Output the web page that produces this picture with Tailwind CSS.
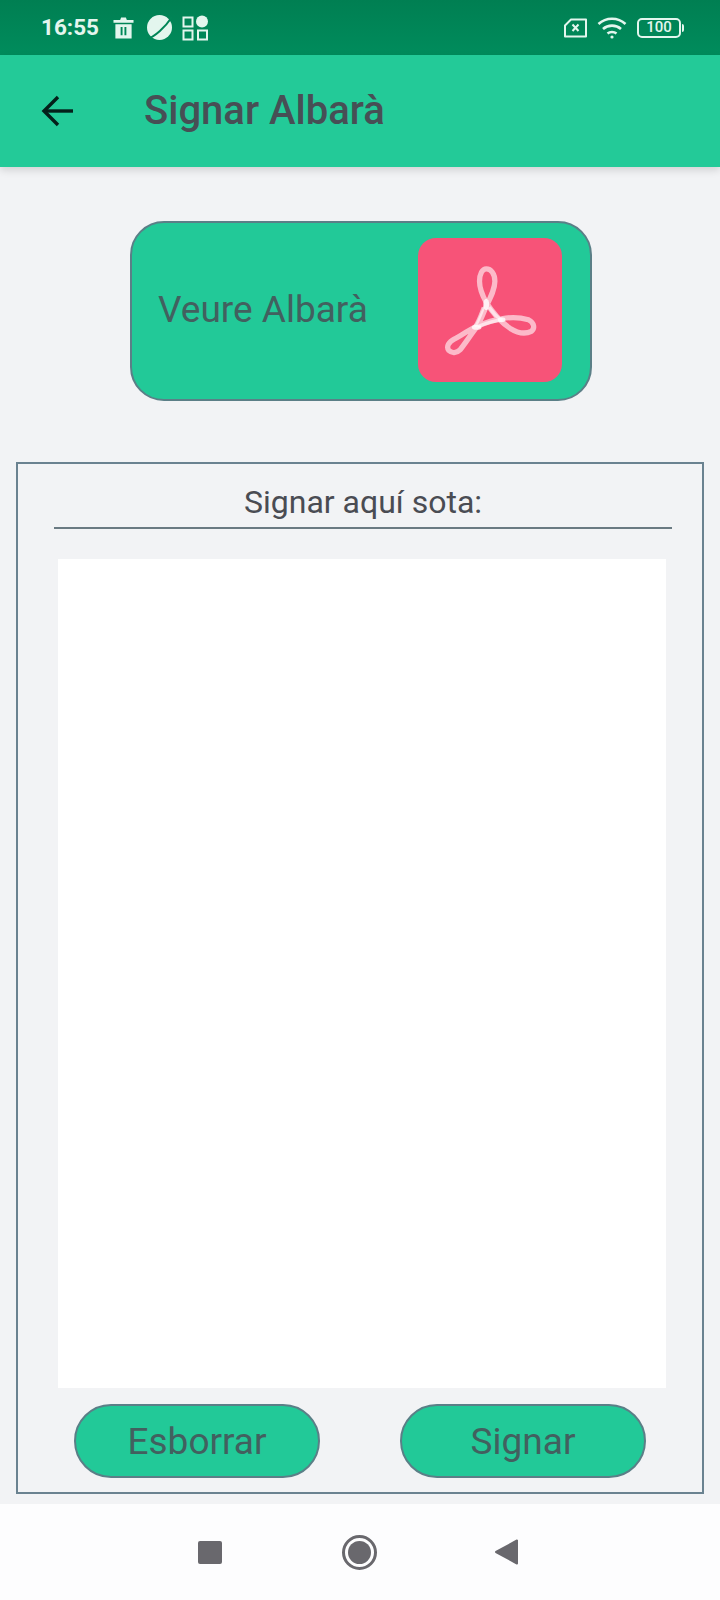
<!DOCTYPE html>
<html lang="ca">
<head>
<meta charset="utf-8">
<title>Signar Albarà</title>
<script src="https://cdn.jsdelivr.net/npm/@tailwindcss/browser@4"></script>
</head>
<body class="m-0 bg-white font-['Roboto',sans-serif]">
<div class="flex h-[1600px] w-[720px] flex-col overflow-hidden bg-[#f2f3f5]">
  <!-- Status bar -->
  <div class="flex h-[55px] items-center justify-between bg-gradient-to-b from-[#007f52] to-[#008c5c] pl-[41px] pr-[36px] text-[#e3f6ee]">
    <div class="flex items-center">
      <span class="text-[22.500px] font-bold leading-none">16:55</span>
      <svg class="ml-[14px]" width="21" height="24" viewBox="0 0 22 24" fill="currentColor"><path d="M0.500 3.500h7l1-2.500h5l1 2.500h7v3h-21z"/><path fill-rule="evenodd" d="M2.500 8h17v15h-17zM8 11v8.500h2v-8.500zM12 11v8.500h2v-8.500z"/></svg>
      <svg class="ml-[12px]" width="27" height="27" viewBox="0 0 27 27"><circle cx="13.500" cy="13.500" r="12.500" fill="currentColor"/><path d="M1 24.500C8 24 20 12 26 3" fill="none" stroke="#008557" stroke-width="2"/></svg>
      <svg class="ml-[9px]" width="27" height="27" viewBox="0 0 27 27" fill="none" stroke="currentColor" stroke-width="2"><rect x="1.500" y="3.500" width="9" height="9"/><rect x="1.500" y="16.500" width="9" height="9"/><rect x="16" y="16.500" width="9" height="9"/><circle cx="20" cy="7.500" r="6" fill="currentColor" stroke="none"/></svg>
    </div>
    <div class="flex items-center">
      <svg width="25" height="20" viewBox="0 0 25 20" fill="none" stroke="currentColor" stroke-width="2"><path d="M8 1.500h15v17h-21v-11z" stroke-linejoin="round"/><path d="M9.500 6.500l6 6.500m0-6.500l-6 6.500" stroke-width="2"/></svg>
      <svg class="ml-[9px]" width="30" height="22" viewBox="0 0 30 22" fill="none" stroke="currentColor" stroke-width="2.600"><path d="M1.500 7C9 0 21 0 28.500 7"/><path d="M6 12C11 7.500 19 7.500 24 12"/><path d="M10.500 16.500C13 14.500 17 14.500 19.500 16.500"/><circle cx="15" cy="20" r="1.600" fill="currentColor" stroke="none"/></svg>
      <div class="ml-[10px] flex items-center">
        <div class="flex h-[20px] w-[44px] items-center justify-center rounded-[5px] border-2 border-[#e3f6ee] text-[15px] font-medium leading-none">100</div>
        <div class="ml-[1px] h-[8px] w-[2px] rounded-r bg-[#e3f6ee]"></div>
      </div>
    </div>
  </div>

  <!-- App bar -->
  <header class="relative z-10 flex h-[112px] items-center bg-[#23ca98] pl-[41px] shadow-[0_3px_8px_rgba(0,0,0,0.14)]">
    <svg width="32" height="32" viewBox="0 0 32 32" fill="none" stroke="#04201a" stroke-width="3.400"><path d="M32 16H3"/><path d="M17 2 3 16l14 14"/></svg>
    <h1 class="ml-[71px] text-[40px] font-medium leading-none text-[#474f55]">Signar Albarà</h1>
  </header>

  <!-- Content -->
  <main class="flex flex-1 flex-col pb-[10px] pl-[16px] pr-[16px] pt-[54px]">
    <div class="ml-[114px] flex h-[180px] w-[462px] items-center rounded-[34px] border-2 border-[#5b7f87] bg-[#22c998] pl-[26px] pr-[28px]">
      <span class="mb-[3px] flex-1 text-[37px] leading-none text-[#42605f]">Veure Albarà</span>
      <div class="mb-[2px] h-[144px] w-[144px] rounded-[18px] bg-[#f75378]">
        <svg width="144" height="144" viewBox="0 0 144 144" fill="none" stroke="#fff" stroke-opacity="0.6" stroke-width="5.500"><g transform="translate(2 4) scale(0.96)"><path d="M69 63C64 54 62 47 62 41C62 33 65 28 69 28C74 28 78 33 78 41C78 49 74 57 69 67C66 74 63 83 58 90C52 98 46 107 42 112C38 116 33 116 30 113C27 109 30 104 36 101C43 97 51 92 59 88C68 84 76 81 85 80C95 78 106 79 113 81C119 84 120 90 116 93C110 96 102 95 94 90C85 84 76 74 69 63Z"/><path d="M66 68C63 76 61 82 57 88M72 68C76 74 80 78 85 82M60 88C68 85 76 82 86 81" stroke-width="3.500"/><ellipse cx="69" cy="65" rx="3" ry="6" fill="#fff" stroke="none" fill-opacity="0.8"/><ellipse cx="59" cy="89" rx="5" ry="2.500" fill="#fff" stroke="none" fill-opacity="0.8"/><ellipse cx="85" cy="81" rx="4" ry="2.500" fill="#fff" stroke="none" fill-opacity="0.8"/></g></svg>
      </div>
    </div>

    <section class="mt-[61px] flex w-[688px] flex-1 flex-col border-2 border-[#6a8290] pb-[14px] pl-[36px] pr-[30px]">
      <div class="flex h-[65px] items-end justify-center border-b-2 border-[#6a7a82] pb-[4px]">
        <span class="text-[32px] leading-[42px] text-[#4a4c53]">Signar aquí sota:</span>
      </div>
      <div class="ml-[4px] mr-[6px] mt-[30px] flex-1 bg-white"></div>
      <div class="mt-[16px] flex w-[612px] justify-between pl-[20px] pr-[20px]">
        <button class="h-[74px] w-[246px] rounded-[37px] border-2 border-[#5b7f87] bg-[#22c998] text-[37px] leading-none text-[#42605f]">Esborrar</button>
        <button class="h-[74px] w-[246px] rounded-[37px] border-2 border-[#5b7f87] bg-[#22c998] text-[37px] leading-none text-[#42605f]">Signar</button>
      </div>
    </section>
  </main>

  <!-- Navigation bar -->
  <nav class="relative flex h-[96px] items-center justify-center bg-[#fdfdfe] pr-[4px]">
    <div class="h-[23px] w-[24px] rounded-[2px] bg-[#69686d]"></div>
    <div class="ml-[120px] flex h-[35px] w-[35px] items-center justify-center rounded-full border-[3px] border-[#69686d]">
      <div class="h-[23px] w-[23px] rounded-full bg-[#69686d]"></div>
    </div>
    <svg class="ml-[118px]" width="24" height="26" viewBox="0 0 24 26" fill="#69686d" stroke="#69686d" stroke-width="2" stroke-linejoin="round"><path d="M22 1.500V24.500L1 13Z"/></svg>
  </nav>
</div>
</body>
</html>
